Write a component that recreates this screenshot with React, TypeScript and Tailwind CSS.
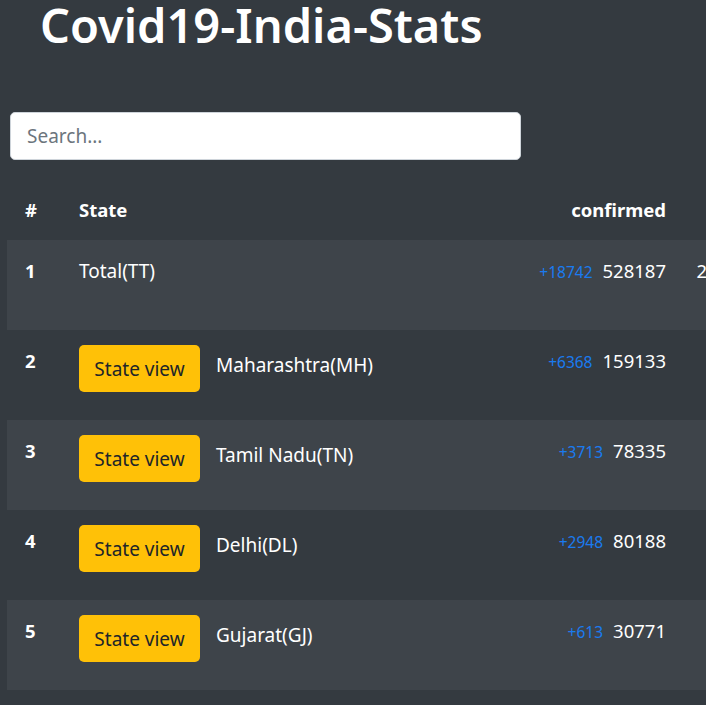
import React from "react";

type Row = { n: number; name: string; delta: string; confirmed: string; active: string; button: boolean };

const rows: Row[] = [
  { n: 1, name: "Total(TT)", delta: "+18742", confirmed: "528187", active: "203051", button: false },
  { n: 2, name: "Maharashtra(MH)", delta: "+6368", confirmed: "159133", active: "67615", button: true },
  { n: 3, name: "Tamil Nadu(TN)", delta: "+3713", confirmed: "78335", active: "33213", button: true },
  { n: 4, name: "Delhi(DL)", delta: "+2948", confirmed: "80188", active: "28329", button: true },
  { n: 5, name: "Gujarat(GJ)", delta: "+613", confirmed: "30771", active: "6919", button: true },
];

export default function App() {
  return (
    <div
      className="w-[706px] h-[705px] overflow-hidden bg-[#343a40] text-white pt-[1px]"
      style={{ fontFamily: '"Noto Sans", "Open Sans", sans-serif' }}
    >
      <h1 className="ml-[40px] text-[47px] leading-[48px] font-semibold text-white">
        Covid19-India-Stats
      </h1>
      <div className="mt-[63px] ml-[10px] w-[511px] h-[48px] bg-white rounded-[5px] border border-[#ced4da] flex items-center px-[16px]">
        <span className="text-[19px] text-[#6c757d]">Search...</span>
      </div>
      <div className="mt-[20px] ml-[7px] w-[900px]">
        <div className="flex h-[60px] items-center font-bold text-[18.5px]">
          <div className="w-[72px] pl-[18px]">#</div>
          <div className="w-[420px]">State</div>
          <div className="w-[167px] text-right">confirmed</div>
          <div className="w-[120px]"></div>
        </div>
        {rows.map((r) => (
          <div
            key={r.n}
            className={`flex h-[90px] items-start pt-[15px] ${r.n % 2 === 1 ? "bg-[#3e444a]" : ""}`}
          >
            <div className="w-[72px] pl-[18px] pt-[4px] font-bold text-[18.5px] leading-[24px]">{r.n}</div>
            <div className="w-[420px] flex items-start">
              {r.button ? (
                <>
                  <div className="w-[121px] h-[47px] rounded-[5px] bg-[#ffc107] text-[#212529] text-[19px] leading-[24px] flex items-center justify-center">
                    State view
                  </div>
                  <span className="ml-[16px] mt-[8px] text-[19px] leading-[24px]">{r.name}</span>
                </>
              ) : (
                <span className="pt-[4px] text-[19px] leading-[24px]">{r.name}</span>
              )}
            </div>
            <div className="w-[167px] pt-[4px] flex justify-end items-baseline leading-[24px]">
              <span className="text-[15.5px] text-[#1a7bf0] mr-[10px]">{r.delta}</span>
              <span className="text-[18.5px]">{r.confirmed}</span>
            </div>
            <div className="w-[94px] pt-[4px] text-right text-[18.5px] leading-[24px]">{r.active}</div>
          </div>
        ))}
      </div>
    </div>
  );
}
